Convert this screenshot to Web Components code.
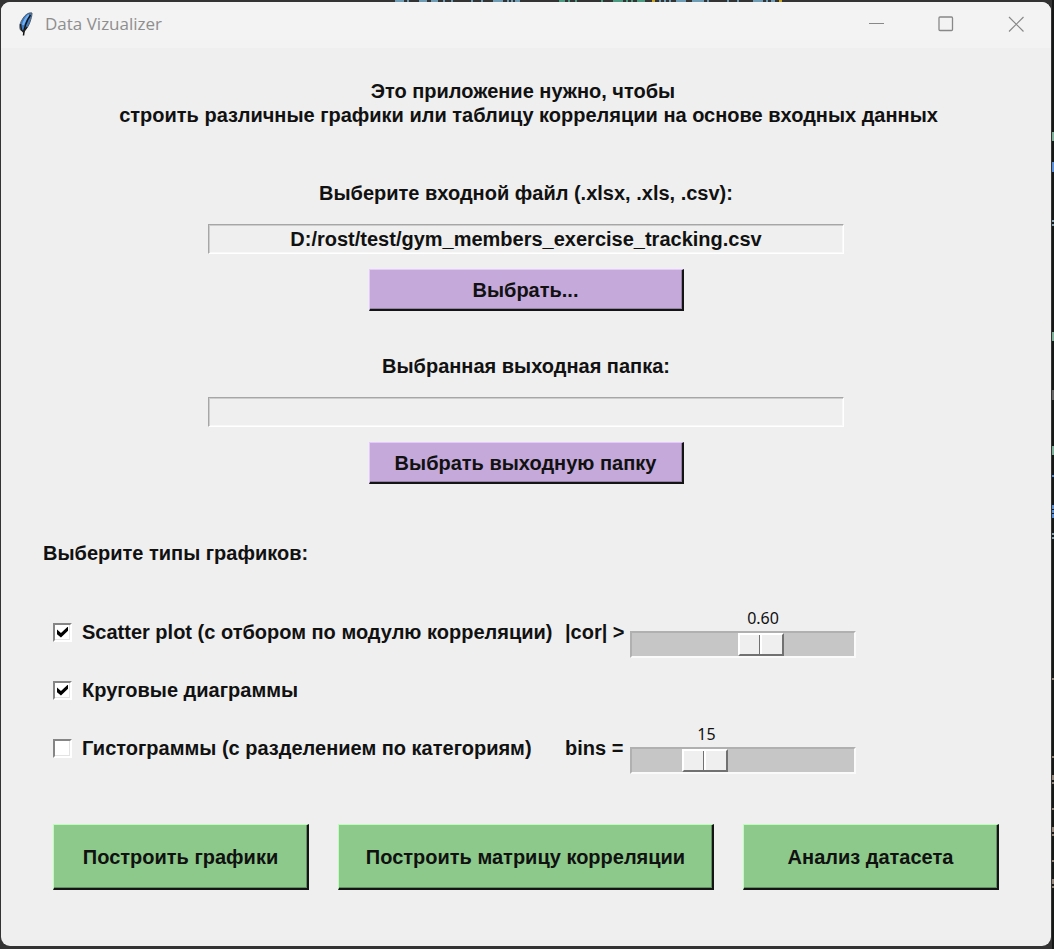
<!DOCTYPE html>
<html lang="ru">
<head>
<meta charset="utf-8">
<title>Data Vizualizer</title>
<style>
  html { height: 100%; }
  body { margin: 0; min-height: 100%; display: flex; background: #2a2a2a; }
</style>
</head>
<body>
<app-window caption="Data Vizualizer">
  <intro-text>Это приложение нужно, чтобы&nbsp;&nbsp;<br>строить различные графики или таблицу корреляции на основе входных данных</intro-text>
  <path-picker label="Выберите входной файл (.xlsx, .xls, .csv):" value="D:/rost/test/gym_members_exercise_tracking.csv" action="Выбрать..."></path-picker>
  <path-picker label="Выбранная выходная папка:" value="" action="Выбрать выходную папку"></path-picker>
  <chart-options heading="Выберите типы графиков:">
    <chart-option checked label="Scatter plot (с отбором по модулю корреляции)">
      <value-slider label="|cor| &gt;" min="0" max="1" step="0.01" value="0.60" digits="2"></value-slider>
    </chart-option>
    <chart-option checked label="Круговые диаграммы"></chart-option>
    <chart-option label="Гистограммы (с разделением по категориям)">
      <value-slider label="bins =" min="1" max="50" step="1" value="15" digits="0"></value-slider>
    </chart-option>
  </chart-options>
  <action-bar>
    <push-button tone="green">Построить графики</push-button>
    <push-button tone="green">Построить матрицу корреляции</push-button>
    <push-button tone="green">Анализ датасета</push-button>
  </action-bar>
</app-window>

<script>
const mount = (el, html) => {
  const root = el.attachShadow({ mode: 'open' });
  const t = document.createElement('template');
  t.innerHTML = html;
  root.append(t.content.cloneNode(true));
  return root;
};

class AppWindow extends HTMLElement {
  connectedCallback() {
    mount(this, `
<style>
  :host { position: relative; flex: 1; display: flex; box-sizing: border-box; padding: 2px 3px 3px 1px; min-width: 0;
    background: #333; font: bold 20px/24px "Liberation Sans", Arial, sans-serif; color: #111; }
  .behind { position: absolute; top: 0; }
  .behind.top { left: 0; width: 800px; height: 2px; }
  .behind.side { right: 0; width: 2px; height: 949px; }
  .frame { flex: 1; min-width: 0; background: #efefef; border-radius: 9px; overflow: hidden; }
  header { box-sizing: border-box; display: flex; align-items: center; height: 46px; padding: 0 0 2px 16px;
    background: #f3f3f3; color: #8e8e8e; }
  .feather { width: 16px; height: 24px; margin-right: 12px; flex: none; }
  h1 { margin: 0; flex: 1; font: 17px/24px "Open Sans", "Segoe UI", sans-serif; }
  header button { width: 70px; height: 44px; border: 0; padding: 0; background: none; color: #888;
    display: flex; align-items: center; justify-content: center; }
  header button svg { width: 16px; height: 16px; fill: none; stroke: currentColor; }
  main { display: flex; flex-direction: column; padding: 31px 52px 56px; }
</style>
<svg class="behind top" viewBox="0 0 800 2" aria-hidden="true" fill="none" stroke-width="2">
  <path stroke="#6f9cb5" stroke-dasharray="9 3 2 10 8 4 7 5 2 6 2 18 2 8 2 10 10 4 2 2 2 2 8 200" d="M395 1H520"/>
  <path stroke="#4a9a82" stroke-dasharray="6 3 2 5 2 24 2 10 10 3 2 3 2 4 8 100" d="M559 1H646"/>
  <path stroke="#6f9cb5" stroke-dasharray="2 3 2 3 2 5 10 6 12 3 2 18 2 8 2 14 10 3 2 3 8 100" d="M659 1H775"/>
  <path stroke="#c9a526" d="M652 1H655M779 1H782"/>
</svg>
<svg class="behind side" viewBox="0 0 2 949" aria-hidden="true">
  <path fill="#161818" d="M0 0H2V949H0z"/>
  <path fill="#7fae98" d="M0 132h2v9H0zM0 332h2v9H0zM0 446h2v9H0z"/>
  <path fill="#5a8fd8" d="M0 162h2v10H0zM0 475h2v2H0zM0 505h2v4H0zM0 510h2v3H0zM0 514h2v4H0z"/>
  <path fill="#8aa4b4" d="M0 220h2v2H0zM0 224h2v2H0zM0 533h2v2H0zM0 537h2v2H0z"/>
  <path fill="#666" d="M0 390h2v10H0z"/>
  <path fill="#94867a" d="M0 678h2v2H0zM0 756h2v2H0zM0 775h2v5H0zM0 782h2v2H0zM0 808h2v2H0zM0 827h2v5H0zM0 834h2v2H0zM0 860h2v2H0zM0 879h2v5H0zM0 886h2v2H0z"/>
</svg>
<div class="frame">
  <header>
    <svg class="feather" viewBox="0 0 16 24" aria-hidden="true">
      <path d="M15 1C11 0 7 4 5 8C3 11 2 15 3.500 18L6.500 19C10 17 12 13 13 10C14 7 15 4 15 1Z" fill="#3d7cc4" stroke="#565c62" stroke-width="1"/>
      <path d="M12 3C9 6 7 9 6 13" fill="none" stroke="#6fb0f5" stroke-width="2"/>
      <path d="M13.500 3C10 8 7 14 6.500 23.500" fill="none" stroke="#151515" stroke-width="1.500"/>
      <path d="M3.500 12L4.500 18L6.500 20L10 15" fill="none" stroke="#222" stroke-width="1.500"/>
    </svg>
    <h1></h1>
    <button type="button" aria-label="Свернуть"><svg viewBox="0 0 16 16"><path d="M1 7.500H16"/></svg></button>
    <button type="button" aria-label="Развернуть"><svg viewBox="0 0 16 16"><rect x="1" y="1" width="13.500" height="13.500" rx="1" stroke-width="1.300"/></svg></button>
    <button type="button" aria-label="Закрыть"><svg viewBox="0 0 16 16"><path d="M1 1L15.500 15.500M15.500 1L1 15.500" stroke-width="1.200"/></svg></button>
  </header>
  <main><slot></slot></main>
</div>`).querySelector('h1').textContent = this.getAttribute('caption');
  }
}

class IntroText extends HTMLElement {
  connectedCallback() {
    mount(this, `
<style>
  :host { display: block; text-align: center; margin-bottom: 54px; padding-left: 5px; }
  p { margin: 0; }
</style><p><slot></slot></p>`);
  }
}

class PushButton extends HTMLElement {
  connectedCallback() {
    mount(this, `
<style>
  :host { display: block; --face: #c4a9da; --light: #e6c9ff; --shade: #9583a5; --h: 42px; }
  :host([tone="green"]) { --face: #8dc98b; --light: #bdffba; --shade: #638d62; --h: 66px; }
  button { display: block; width: 100%; height: var(--h); padding: 0; font: inherit; color: inherit; border-radius: 0;
    background: var(--face); border: 1px solid; border-color: var(--light) #141414 #141414 var(--light);
    border-right-width: 2px; border-bottom-width: 2px;
    box-shadow: inset -1px -1px var(--shade); }
</style><button type="button"><slot></slot></button>`);
  }
}

class PathPicker extends HTMLElement {
  connectedCallback() {
    const r = mount(this, `
<style>
  :host { display: flex; flex-direction: column; align-items: center; margin-bottom: 43px; }
  label { margin-bottom: 19px; }
  input { box-sizing: border-box; width: 100%; max-width: 636px; height: 30px; margin: 0 0 15px; padding: 0; border-radius: 0;
    font: inherit; color: inherit; text-align: center; background: #efefef;
    border: 1px solid; border-color: #a6a6a6 #fff #fff #a6a6a6; box-shadow: inset 1px 1px #cdcdcd, inset -1px -1px #f8f8f8; outline: 0; }
  push-button { width: 315px; max-width: 100%; }
</style>
<label for="path"></label>
<input id="path" type="text" readonly>
<push-button></push-button>`);
    r.querySelector('label').textContent = this.getAttribute('label');
    r.querySelector('input').value = this.getAttribute('value');
    r.querySelector('push-button').textContent = this.getAttribute('action');
  }
}

class ChartOptions extends HTMLElement {
  connectedCallback() {
    mount(this, `
<style>
  :host { display: block; margin: 14px 0 50px; }
  h2 { margin: 0 0 41px -10px; font: inherit; }
  .rows { display: grid; row-gap: 6px; }
</style><h2></h2><div class="rows"><slot></slot></div>`).querySelector('h2').textContent = this.getAttribute('heading');
  }
}

class ChartOption extends HTMLElement {
  connectedCallback() {
    const r = mount(this, `
<style>
  :host { display: grid; grid-template-columns: 512px 1fr; align-items: center; height: 52px; }
  label { display: flex; align-items: center; gap: 10px; white-space: nowrap; }
  input { appearance: none; flex: none; box-sizing: border-box; width: 19px; height: 19px; margin: 0; background: #fff;
    border: 2px solid; border-color: #858585 #fff #fff #858585; box-shadow: inset -1px -1px #e3e3e3;
    display: grid; place-items: center; }
  input:checked::before { content: ""; width: 11px; height: 11px; background: #000;
    clip-path: polygon(0 28%, 36% 58%, 100% 0, 100% 38%, 36% 100%, 0 70%); }
</style>
<label><input type="checkbox"><span></span></label><slot></slot>`);
    r.querySelector('span').textContent = this.getAttribute('label');
    r.querySelector('input').checked = this.hasAttribute('checked');
  }
}

class ValueSlider extends HTMLElement {
  connectedCallback() {
    const r = mount(this, `
<style>
  :host { display: grid; grid-template-columns: 65px minmax(0, 226px); align-items: center; --thumb: 46px; }
  .scale { display: grid; height: 52px; align-content: start; row-gap: 1px; }
  output { width: var(--thumb); margin-left: calc((100% - var(--thumb)) * var(--ratio)); padding-left: 2px; text-align: center;
    font: 16px/24px "Noto Sans", "Segoe UI", sans-serif; }
  input { appearance: none; box-sizing: border-box; width: 100%; height: 27px; margin: 0; background: #c6c6c6;
    border: 2px solid; border-color: #b0b0b0 #fafafa #fafafa #b0b0b0; }
  input::-webkit-slider-thumb { appearance: none; box-sizing: border-box; width: var(--thumb); height: 23px;
    border: 2px solid; border-color: #fff #717171 #717171 #fff;
    background: linear-gradient(90deg, #efefef 19px, #717171 19px 20px, #fff 20px 22px, #efefef 22px); }
</style>
<label for="range"></label>
<div class="scale"><output for="range"></output><input id="range" type="range"></div>`);
    const input = r.querySelector('input'), output = r.querySelector('output');
    r.querySelector('label').textContent = this.getAttribute('label');
    for (const name of ['min', 'max', 'step', 'value']) input.setAttribute(name, this.getAttribute(name));
    const sync = () => {
      output.textContent = Number(input.value).toFixed(this.getAttribute('digits'));
      this.style.setProperty('--ratio', (input.value - input.min) / (input.max - input.min));
    };
    input.addEventListener('input', sync);
    sync();
  }
}

class ActionBar extends HTMLElement {
  connectedCallback() {
    mount(this, `
<style>
  :host { display: grid; grid-template-columns: 256fr 376fr 256fr; column-gap: 29px; }
</style><slot></slot>`);
  }
}

customElements.define('push-button', PushButton);
customElements.define('intro-text', IntroText);
customElements.define('path-picker', PathPicker);
customElements.define('value-slider', ValueSlider);
customElements.define('chart-option', ChartOption);
customElements.define('chart-options', ChartOptions);
customElements.define('action-bar', ActionBar);
customElements.define('app-window', AppWindow);
</script>
</body>
</html>
